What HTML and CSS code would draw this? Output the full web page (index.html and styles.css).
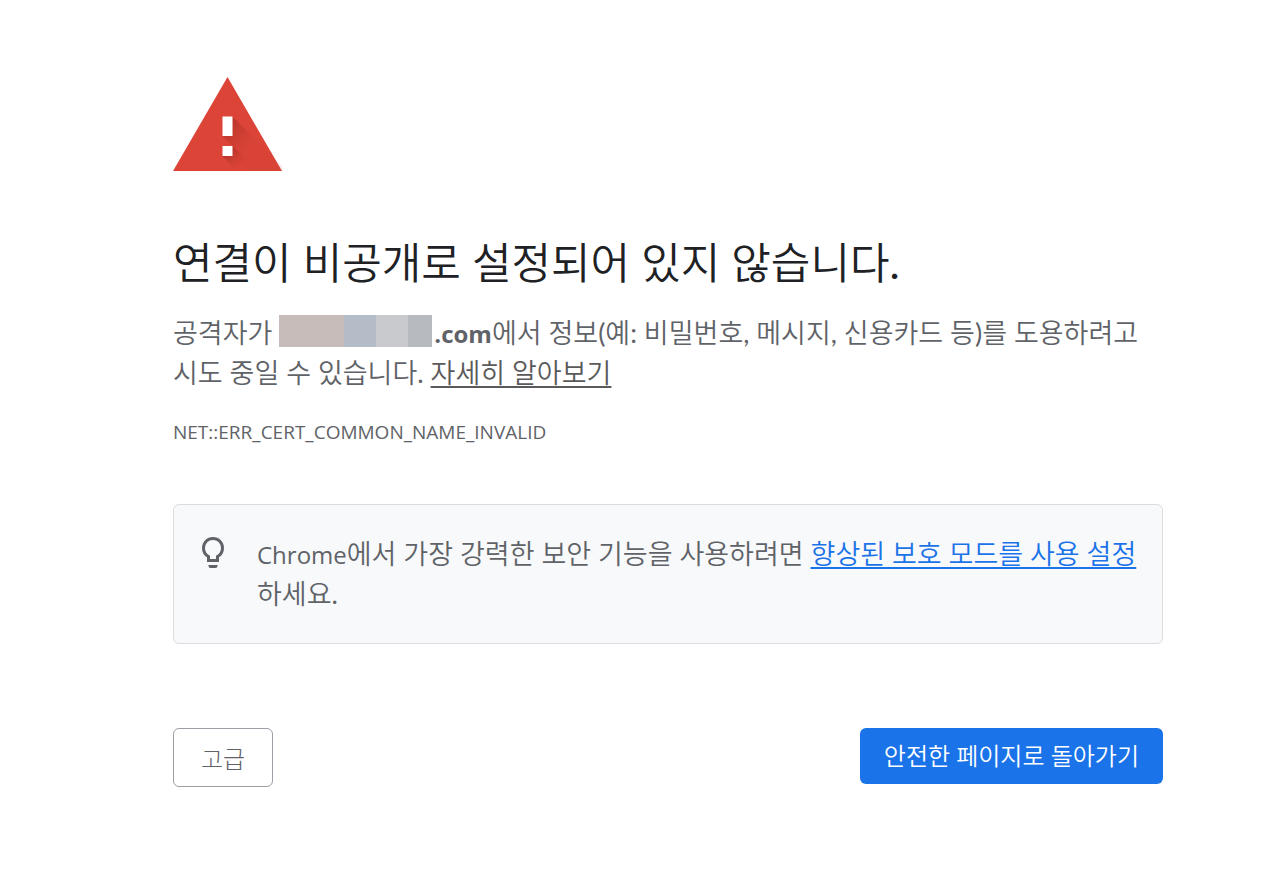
FILE: index.html
```
<!DOCTYPE html>
<html lang="ko">
<head>
    <meta charset="UTF-8">
    <meta name="viewport" content="width=device-width, initial-scale=1.0">
    <title>개인 정보 보호 오류</title>
    <link rel="stylesheet" href="styles.css">
</head>
<body>

    <main class="interstitial">
        <!-- Warning icon -->
        <svg class="icon-warning" viewBox="0 0 109 94" aria-hidden="true">
            <defs>
                <linearGradient id="shade" gradientUnits="userSpaceOnUse" x1="52" y1="46" x2="76" y2="70">
                    <stop offset="0" stop-color="#b5342a"/>
                    <stop offset="1" stop-color="#c93b2f" stop-opacity="0.1"/>
                </linearGradient>
                <linearGradient id="shade-dot" gradientUnits="userSpaceOnUse" x1="55" y1="74" x2="69" y2="88">
                    <stop offset="0" stop-color="#b5342a"/>
                    <stop offset="1" stop-color="#c93b2f" stop-opacity="0"/>
                </linearGradient>
            </defs>
            <path fill="#db4437" d="M54.500 0L109 94H0z"/>
            <path fill="url(#shade)" d="M59.500 39.500L109 89V94H74.500L59.500 79V69L49.500 59H59.500z"/>
            <path fill="url(#shade-dot)" d="M59.500 69L84.500 94H64.500L49.500 79z"/>
            <path fill="#fff" d="M49.500 39.500h10v19.500h-10zM49.500 69h10v10h-10z"/>
        </svg>

        <h1>연결이 비공개로 설정되어 있지 않습니다.</h1>

        <p class="message">공격자가 <span class="host"><span class="mask"></span><strong class="latin">.com</strong></span>에서 정보(예: 비밀번호, 메시지, 신용카드 등)를 도용하려고 시도 중일 수 있습니다. <a href="#" class="learn-more">자세히 알아보기</a></p>

        <div class="error-code">NET::ERR_CERT_COMMON_NAME_INVALID</div>

        <!-- Enhanced protection -->
        <div class="promo">
            <svg class="icon-bulb" viewBox="0 0 24 31" aria-hidden="true">
                <path fill="none" stroke="#5f6368" stroke-width="3" d="M7.500 23.500V19.500C4 17.500 2.500 14.500 2.500 11.200C2.500 5.500 6.500 1.500 12 1.500S21.500 5.500 21.500 11.200C21.500 14.500 20 17.500 16.500 19.500V23.500z"/>
                <path fill="#5f6368" d="M7.500 28h9v1q0 2-2 2h-5q-2 0-2-2z"/>
            </svg>
            <p><span class="latin">Chrome</span>에서 가장 강력한 보안 기능을 사용하려면 <a href="#">향상된 보호 모드를 사용 설정</a>하세요.</p>
        </div>

        <!-- Buttons -->
        <div class="btn-container">
            <button type="button" class="btn-details">고급</button>
            <button type="button" class="btn-primary">안전한 페이지로 돌아가기</button>
        </div>
    </main>

</body>
</html>
```
FILE: styles.css
```
body {
    margin: 0;
    background-color: #fff;
    color: #5f6368;
    font-family: Lato, "Noto Sans CJK KR DemiLight", "Noto Sans CJK KR", sans-serif;
    font-size: 27px;
    font-weight: 400;
    line-height: 40px;
}
.interstitial { padding: 77px 114px 48px 173px; }
.icon-warning { display: block; width: 109px; height: 94px; }
h1 {
    margin: 64px 0 22px;
    color: #202124;
    font-size: 43px;
    font-weight: 400;
    line-height: 56px;
}
p { margin: 0; }
.latin {
    font-family: "Open Sans", sans-serif;
    font-size: 24px;
    font-weight: 400;
    line-height: 32px;
}
strong.latin { font-weight: 700; }
.host { white-space: nowrap; }
.mask {
    display: inline-block;
    width: 153px;
    height: 32px;
    margin-right: 2px;
    vertical-align: -4px;
    background: linear-gradient(to right, #c8bcbb 65px, #b4bdc7 65px 97px, #c8cace 97px 129px, #b7babe 129px);
}
.learn-more { color: #5a5a5a; }
.error-code {
    margin-top: 23px;
    font-family: "Open Sans", sans-serif;
    font-size: 19px;
    font-weight: 400;
    line-height: 32px;
}
.promo {
    display: flex;
    gap: 32px;
    margin-top: 56px;
    padding: 29px 24px 29px 27px;
    border: 1px solid #dadce0;
    border-radius: 6px;
    background-color: #f8f9fa;
}
.promo a { color: #1a73e8; }
.icon-bulb { flex: none; width: 24px; height: 31px; margin-top: 3px; }
a { text-decoration-thickness: 2px; text-underline-offset: 3px; text-decoration-skip-ink: none; }
.btn-container {
    display: flex;
    justify-content: space-between;
    align-items: flex-start;
    margin-top: 84px;
}
button {
    padding: 12px 24px;
    border: none;
    border-radius: 6px;
    font-family: inherit;
    font-size: 24px;
    font-weight: 400;
    line-height: 32px;
    cursor: pointer;
}
.btn-details {
    padding: 13px 27px 12px;
    border: 1px solid #9aa0a6;
    background-color: #fff;
    color: #5f6368;
    font-family: "Noto Sans CJK KR", sans-serif;
    font-weight: 300;
}
.btn-primary { background-color: #1a73e8; color: #fff; }
```
